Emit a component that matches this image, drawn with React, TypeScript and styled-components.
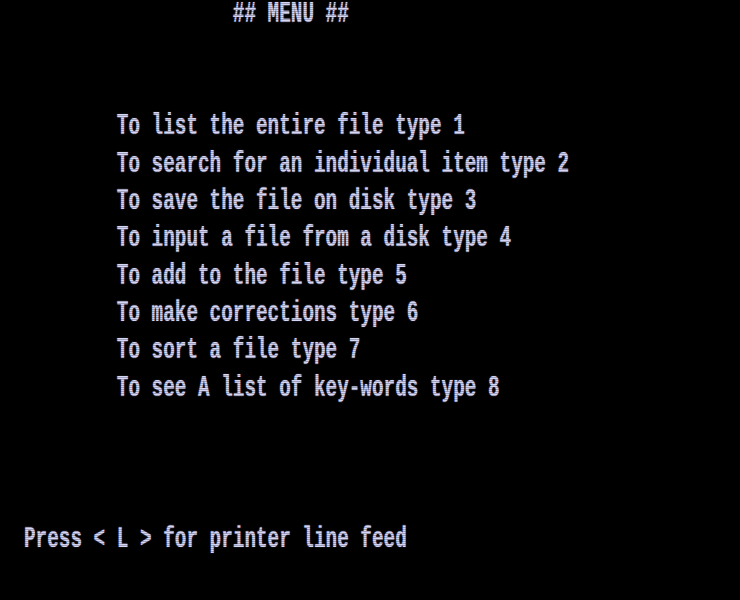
import React from "react";
import styled, { createGlobalStyle } from "styled-components";

const Global = createGlobalStyle`
  html, body { margin: 0; padding: 0; background: #000; }
  body { width: 740px; height: 600px; overflow: hidden; }
`;

const Screen = styled.div`
  position: relative;
  width: 740px;
  height: 600px;
  background: #000;
  display: flex;
  flex-direction: column;
  padding-left: 24px;
  box-sizing: border-box;
  font-family: "Liberation Mono", "DejaVu Sans Mono", monospace;
  font-size: 19.33px;
  font-weight: bold;
  color: #d6d6f6;
  text-shadow: 0 0 1px rgba(200, 200, 255, 0.6);
  &::after {
    content: "";
    position: absolute;
    inset: 0;
    pointer-events: none;
    background: repeating-linear-gradient(
      to bottom,
      rgba(0, 0, 0, 0) 0px,
      rgba(0, 0, 0, 0) 1px,
      rgba(0, 0, 0, 0.25) 1px,
      rgba(0, 0, 0, 0.25) 2px
    );
  }
`;

const Line = styled.div<{ $indent?: number; $height?: number; $top?: number }>`
  display: flex;
  align-items: center;
  height: ${(p) => p.$height ?? 37.3}px;
  margin-top: ${(p) => p.$top ?? 0}px;
  padding-left: ${(p) => (p.$indent ?? 0) * 11.6}px;
`;

const Text = styled.span`
  display: block;
  line-height: 15px;
  white-space: pre;
  transform: scaleY(1.55);
  transform-origin: 0 50%;
`;

const Menu = styled.div<{ $top: number }>`
  display: flex;
  flex-direction: column;
  margin-top: ${(p) => p.$top}px;
`;

const items = [
  "To list the entire file type 1",
  "To search for an individual item type 2",
  "To save the file on disk type 3",
  "To input a file from a disk type 4",
  "To add to the file type 5",
  "To make corrections type 6",
  "To sort a file type 7",
  "To see A list of key-words type 8",
];

export default function App() {
  return (
    <>
      <Global />
      <Screen>
        <Line $indent={18} $height={31}>
          <Text>## MENU ##</Text>
        </Line>
        <Menu $top={78.3}>
          {items.map((t) => (
            <Line key={t} $indent={8}>
              <Text>{t}</Text>
            </Line>
          ))}
        </Menu>
        <Line $top={114.2}>
          <Text>Press &lt; L &gt; for printer line feed</Text>
        </Line>
      </Screen>
    </>
  );
}
